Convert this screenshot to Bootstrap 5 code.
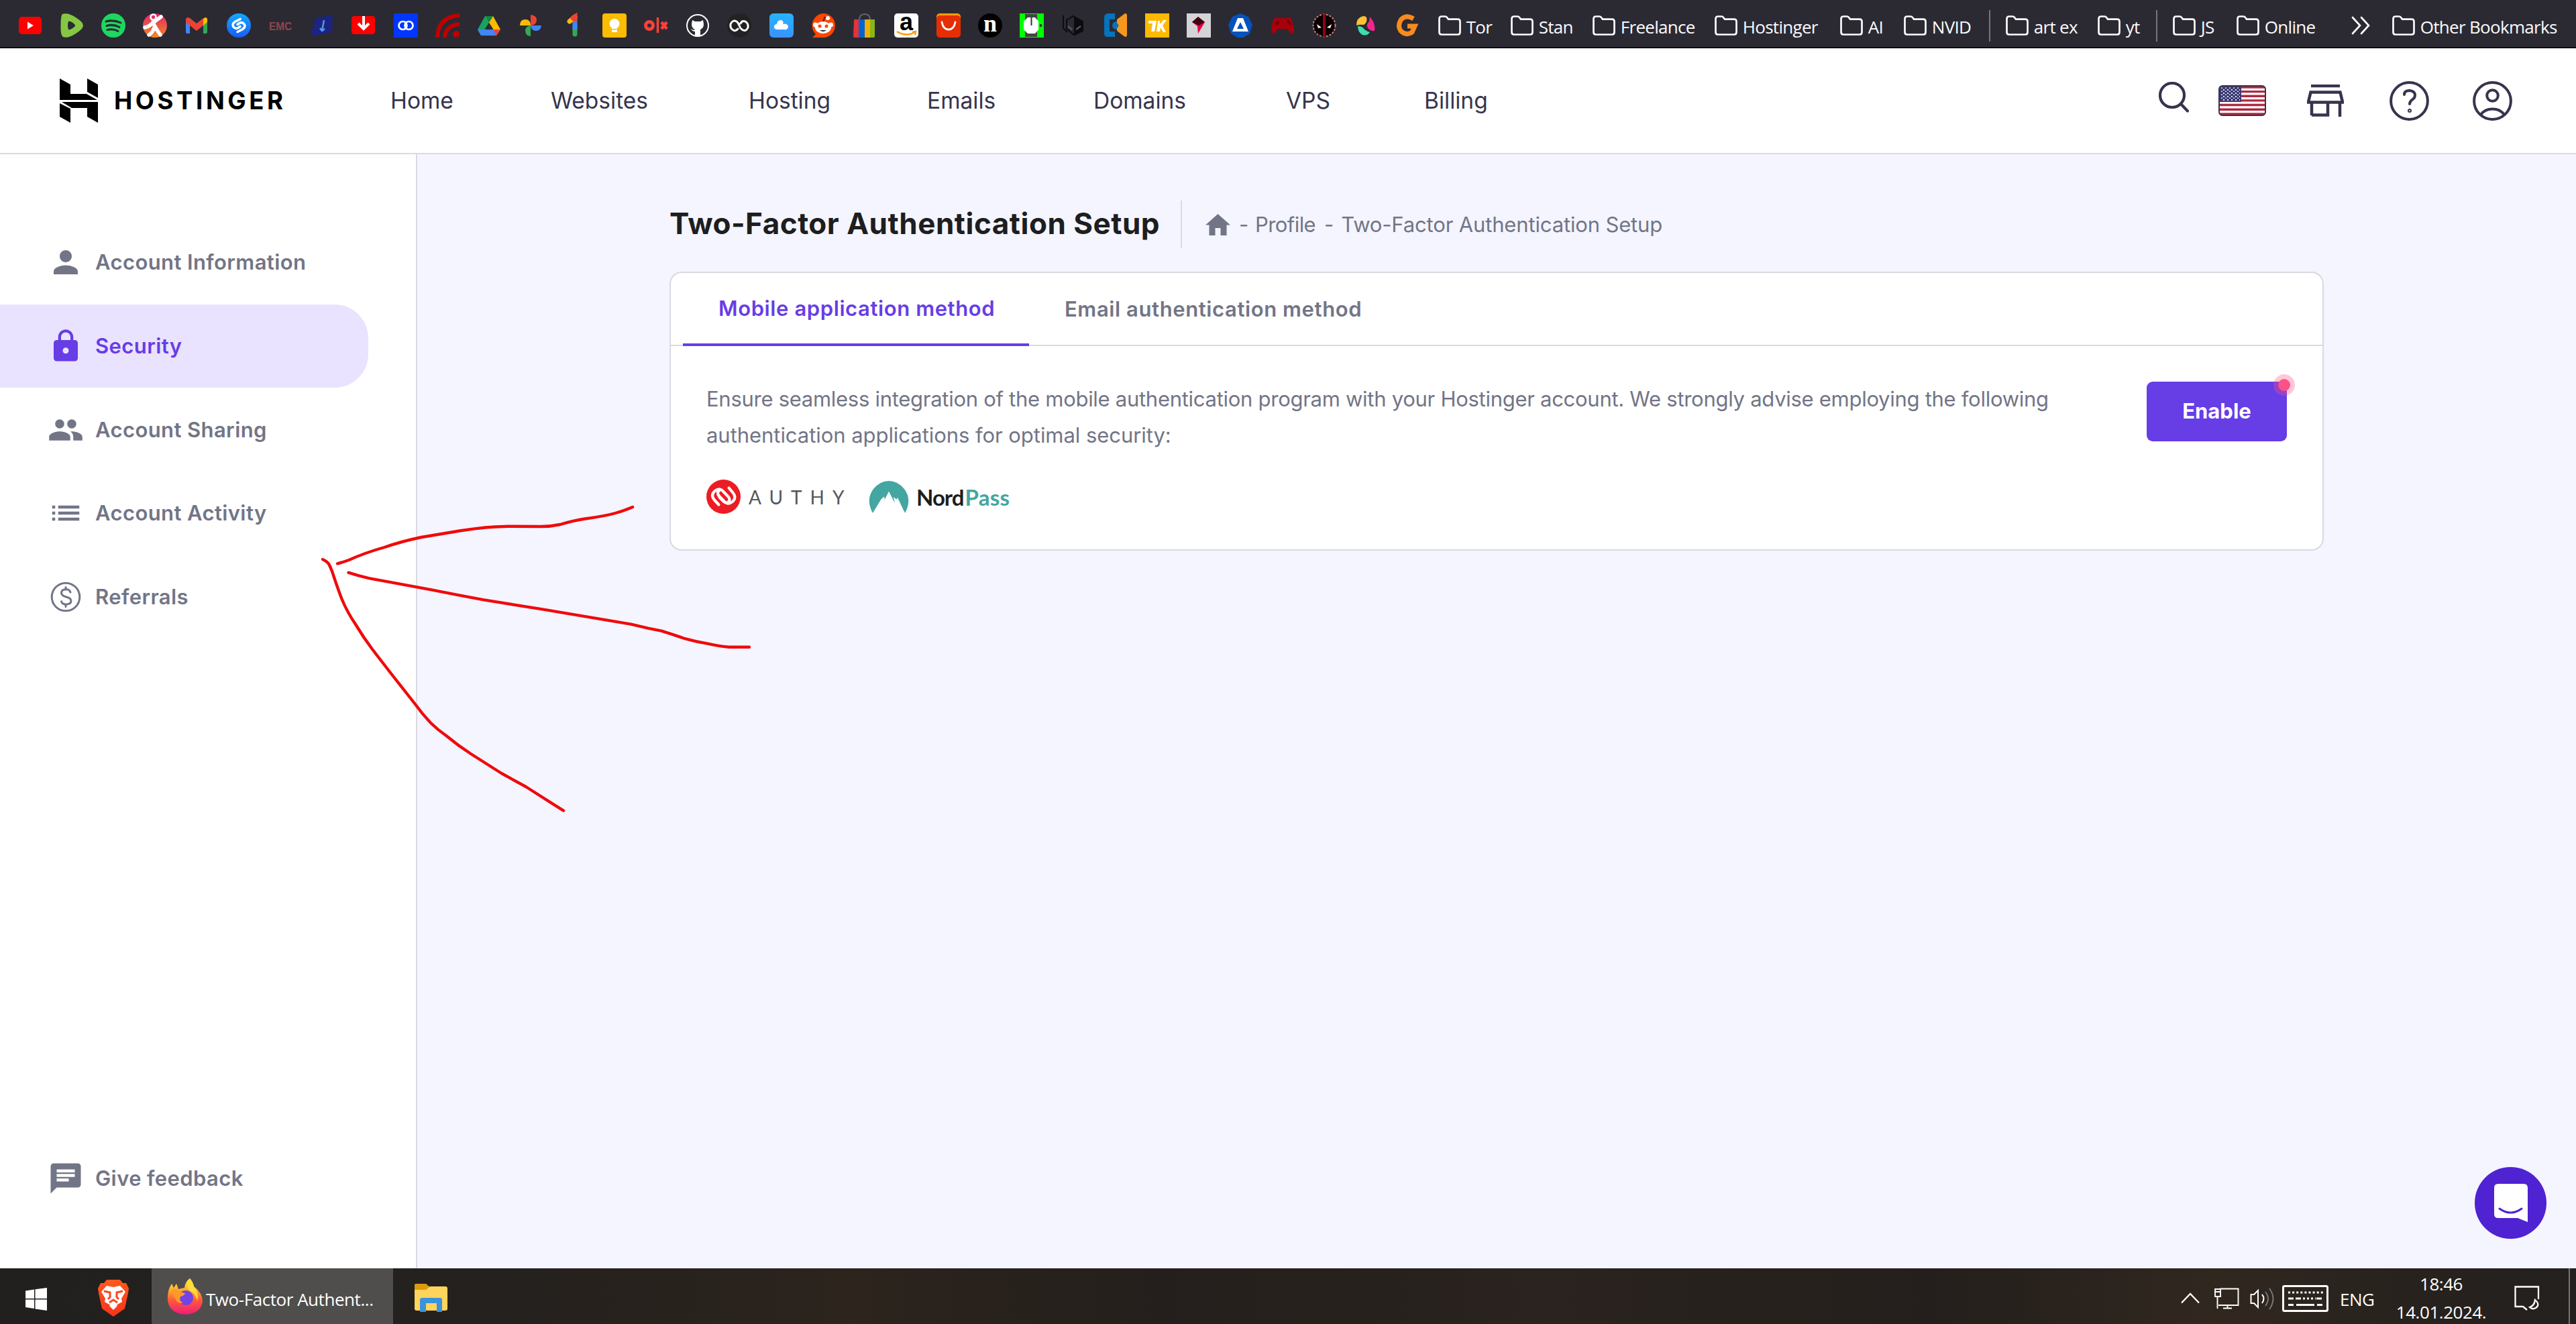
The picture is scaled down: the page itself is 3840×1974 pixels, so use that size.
<!DOCTYPE html>
<html lang="en">
<head>
<meta charset="utf-8">
<title>Two-Factor Authentication Setup</title>
<link href="https://cdn.jsdelivr.net/npm/bootstrap@5.3.0/dist/css/bootstrap.min.css" rel="stylesheet">
<style>
html,body{height:1974px;overflow:hidden}
body{font-family:Inter,"Liberation Sans",sans-serif;font-size:31px;line-height:54px;color:#727586;background:#f4f5ff}
svg{display:block;flex:none}
a{color:inherit;text-decoration:none}
.bookmarks{height:72px;background:#2b2a33;border-bottom:2px solid #0c0c10;padding-left:13.4px;padding-bottom:2px;color:#fbfbfe;font:26px/36px "Open Sans",sans-serif;letter-spacing:-.7px}
.favs{display:grid;grid-template-columns:repeat(34,62.24px);justify-items:center}
.favs svg{width:36px;height:36px;overflow:visible;letter-spacing:0}
.folders{display:grid;margin-left:13.4px;align-items:center;grid-template-columns:108px 122px 182px 187px 95px 128px 24px 137px 88px 24px 95px 171px 61px 270px}
.folders svg{width:36px;height:36px;margin-right:7px}
.folders a{height:36px;white-space:nowrap}
.folders a span{padding-top:2px}
.folders i{width:2px;height:47px;background:#76757f}
.topbar{height:158px;border-bottom:2px solid #d8dae0;color:#36344d}
.brand-text{font-size:36.5px;font-weight:700;letter-spacing:4.6px;color:#000;margin-left:23px;width:412px}
.mainnav{display:grid;grid-template-columns:239px 295px 266px 248px 287px 206px 110px;font-size:33.5px}
.tools{padding-right:95px}
.sidebar{width:622px;border-right:2px solid #d8dae0;padding-top:99px;font-weight:600;letter-spacing:.4px}
.sidebar a{height:124.7px;padding-left:71px}
.sidebar svg{width:54px;height:54px;margin-right:17px}
.sidebar .current{background:#eae3ff;color:#673de6;width:549px;border-radius:0 50px 50px 0}
.feedback{margin-bottom:72px}
.content{padding:69px 0 0 376px}
.page-title{font-size:44px;font-weight:700;color:#1d1e20;letter-spacing:.52px;width:762px;padding-bottom:2px}
.crumbs{height:71px;border-left:2px solid #d8dae0;padding-left:35px;letter-spacing:-.15px;white-space:pre}
.panel{width:2466px;height:416px;margin-top:35px;border:2px solid #d8dae0;border-radius:18px}
.tabs{height:109px;border-bottom:2px solid #d8dae0;padding-left:18px;font-weight:600;letter-spacing:.6px}
.tabs a{width:516px;height:109px;padding:0 0 2px 53px;white-space:nowrap}
.tabs .current{color:#673de6;border-bottom:4px solid #673de6;padding-bottom:0}
.panel-main{padding:52px 53px 0 53px}
.advice{width:2040px;letter-spacing:-.28px;margin-bottom:39px}
.advice span{letter-spacing:-.05px}
.enable{width:209px;height:89px;margin-top:1px;border-radius:9px;background:#673de6;color:#fff;font-weight:700;font-size:31px}
.pulse{right:-12px;top:-11px;width:32px;height:32px;border-radius:50%;background:rgba(252,81,133,.32)}
.pulse::after{content:"";position:absolute;inset:7px;border-radius:50%;background:#fc5185}
.authy{font:28px/50px Lato,sans-serif;letter-spacing:12px;color:#54585c;margin-left:12px;width:179px}
.nord{font:700 33px/50px Lato,sans-serif;letter-spacing:-1px;color:#1d1e20;margin-left:11px;padding-top:1px}
.nord span{color:#44a6a1;letter-spacing:.3px;margin-left:2px}
.taskbar{height:83px;background:linear-gradient(90deg,#21201e 0,#25211e 20%,#2c241d 33%,#241f1c 45%,#2a231f 60%,#241f1c 75%,#30271f 86%,#27221e 94%,#24201e);color:#fff;font:26px/42px "Open Sans",sans-serif;letter-spacing:-.45px}
.task{width:360px;height:83px;background:#4f4e4c;padding-left:23px;margin-left:34px}
.chat{position:fixed;left:3689px;top:1740px;width:107px;height:107px}
.pen{left:0;top:0;pointer-events:none}
.clock{width:150px;margin-left:24px;letter-spacing:-.45px;text-align:center}
</style>
<script src="https://cdn.jsdelivr.net/npm/bootstrap@5.3.0/dist/js/bootstrap.bundle.min.js"></script>
</head>
<body class="d-flex flex-column">
<svg width="0" height="0" class="position-absolute"><defs>
<symbol id="folder" viewBox="0 0 36 36"><path d="M2.500 28V8q0-3.500 3.500-3.500h5q2 0 3 1.500l2 2.600h14q3.500 0 3.500 3.500V28q0 3.500-3.500 3.500H6q-3.500 0-3.500-3.500Z" fill="none" stroke="#fbfbfe" stroke-width="2.700"/></symbol>
<linearGradient id="gs" x2="0" y2="1"><stop stop-color="#12a8ff"/><stop offset="1" stop-color="#1a5cf5"/></linearGradient>
<linearGradient id="gf" x2="0" y2="1"><stop stop-color="#e0246a"/><stop offset="1" stop-color="#f58a22"/></linearGradient>
<linearGradient id="gc" x2="0" y2="1"><stop stop-color="#25b4ff"/><stop offset="1" stop-color="#3a93ff"/></linearGradient>
<linearGradient id="gb" x2="0" y2="1"><stop stop-color="#ff5a1f"/><stop offset="1" stop-color="#f8331b"/></linearGradient>
<linearGradient id="gx" x2="0" y2="1"><stop stop-color="#fff14f"/><stop offset=".3" stop-color="#ffb02c"/><stop offset=".6" stop-color="#ff5a3a"/><stop offset="1" stop-color="#f0197d"/></linearGradient>
</defs></svg>

<div class="bookmarks d-flex align-items-center flex-none">
<div class="favs pt-2">
<svg viewBox="0 0 36 36"><rect x="1" y="5" width="34" height="26" rx="5" fill="red"/><path d="M14 12.500v11l9-5.500Z" fill="#fff"/></svg>
<svg viewBox="0 0 36 36"><path fill-rule="evenodd" fill="#85c742" d="M4 1Q12-2 24 6q11 7 11 12t-11 12Q12 38 5 35 1 33 1.500 18 1.500 3 4 1Zm9 11q-2 6 0 12 3 1 9-4 2-2 0-4-6-5-9-4Z"/></svg>
<svg viewBox="0 0 36 36"><circle cx="18" cy="18" r="18" fill="#1ed760"/><path d="M7 12q11-3 22 2M8 18.500q10-3 19 2M9 24.500q9-2 16 2" fill="none" stroke="#2b2a33" stroke-width="3" stroke-linecap="round"/></svg>
<svg viewBox="0 0 36 36"><circle cx="18" cy="18" r="18" fill="url(#gf)"/><circle cx="15.500" cy="5.500" r="4" fill="none" stroke="#fff" stroke-width="2.500"/><path d="M3 21q6-1 12-7l12-9M15 13q3 8 11 19M17 21q-2 7-8 11" fill="none" stroke="#fff" stroke-width="5.500" stroke-linecap="round"/></svg>
<svg viewBox="0 0 36 36"><path d="M2 8v20q0 2 2 2h4V14Z" fill="#4285f4"/><path d="M34 8v20q0 2-2 2h-4V14Z" fill="#34a853"/><path d="M28 8q4-4 6 0v5l-6 5Z" fill="#fbbc04"/><path d="M2 9q1-5 6-2l10 8 10-8v11l-10 8-10-8-6-5Z" fill="#ea4335"/></svg>
<svg viewBox="0 0 36 36"><circle cx="18" cy="18" r="18" fill="url(#gs)"/><path d="m20 8.500-7 3.500q-6 4-3 8t8 1l2-1.500M16 27.500l7-3.500q6-4 3-8t-8-1l-2 1.500" fill="none" stroke="#fff" stroke-width="3.600" stroke-linecap="round"/></svg>
<svg viewBox="0 0 36 36"><text x="1" y="25" textLength="34" lengthAdjust="spacingAndGlyphs" font-family="Liberation Sans" font-size="17" font-weight="700" fill="#91454a">EMC</text></svg>
<svg viewBox="0 0 36 36"><path d="M8 7 34 2l-1 26-32 6Z" fill="#1c247f"/><path d="m21 10-3 16m-3-4 3 4 4-3" stroke="#5596ed" stroke-width="2.500" fill="none"/></svg>
<svg viewBox="0 0 36 36"><rect y="4" width="35" height="27" rx="4" fill="red"/><path d="M18 4v17M10 15l8 8 8-8" stroke="#fff" stroke-width="4" fill="none"/></svg>
<svg viewBox="0 0 36 36"><path fill="#0136fe" d="M0 0h36v36H0Z"/><g fill="none" stroke="#fff" stroke-width="2.700"><rect x="7.500" y="12" width="12" height="12" rx="6"/><rect x="16.500" y="12" width="12" height="12" rx="6"/></g></svg>
<svg viewBox="0 0 36 36"><path d="M3 36Q4 5 36 3M14 36q1-18 22-20" fill="none" stroke="#bf0000" stroke-width="6"/><circle cx="31" cy="31" r="5" fill="#bf0000"/></svg>
<svg viewBox="0 0 36 36"><path d="M12 4h12L12 24 6 33 1 24Z" fill="#1aa260"/><path d="M12 4h12l11 20H24Z" fill="#ffba00"/><path d="M1 24h34l-6 9H6Z" fill="#4285f4"/><path d="M12 4h12l-6 10Z" fill="#128642"/><path d="m29 33 6-9H24Z" fill="#ea4335"/><path d="m18 14 6 9H12Z" fill="#2b2a33"/></svg>
<svg viewBox="0 0 36 36"><path d="M18 2q9 1 9 8t-9 8Z" fill="#ea4335"/><path d="M34 18q-1 8-8 8t-8-8Z" fill="#4285f4"/><path d="M18 34q-8-1-8-8t8-8Z" fill="#34a853"/><path d="M2 18q0-9 8-9t8 9Z" fill="#fbbc04"/></svg>
<svg viewBox="0 0 36 36" fill="none" stroke-width="7" stroke-linecap="round"><path d="M21 18v13" stroke="#34a853"/><path d="M21 6v18" stroke="#4285f4" stroke-linecap="butt"/><path d="m13 12 8-7" stroke="#fbbc04"/><path d="m18 7 3-2v4" stroke="#ea4335"/></svg>
<svg viewBox="0 0 36 36"><rect width="36" height="36" rx="4" fill="#fbbc04"/><circle cx="18" cy="15.500" r="7.500" fill="#fff"/><path d="M14 19h8v4h-8Zm0 5.500h8V28h-8Z" fill="#fff"/></svg>
<svg viewBox="0 0 36 36" fill="none" stroke="#ff4036"><circle cx="8" cy="18" r="5.500" stroke-width="5"/><path d="M20.500 6v23" stroke-width="3.500"/><path d="m26 13 8 10m0-10-8 10" stroke-width="4.500"/></svg>
<svg viewBox="0 0 36 36"><circle cx="18" cy="18" r="16" fill="none" stroke="#fff" stroke-width="2"/><path d="M14 33v-6q-4 0-6-4 4 3 6 1-5-2-5-8l1-6 4 2h8l4-2 1 6q0 6-5 8v9Z" fill="#fff"/></svg>
<svg viewBox="0 0 36 36"><circle cx="18" cy="18" r="18" fill="#222"/><path d="M16 23q-3 4-7 2-5-3-4-9 3-7 9-4 3 2 4 6t4 6q6 4 9-3 1-6-4-9-5-2-7 3" fill="none" stroke="#fff" stroke-width="3" stroke-linecap="round"/></svg>
<svg viewBox="0 0 36 36"><rect width="36" height="36" rx="6" fill="url(#gc)"/><path d="M11 24q-5-1-4-5 1-3 4-3 1-7 7-6 4 2 2 6 7-2 8 4-1 5-6 4Z" fill="#fff"/></svg>
<svg viewBox="0 0 36 36"><path d="M18 0a18 18 0 0 1 0 36H2l5-5A18 18 0 0 1 18 0Z" fill="#ff4500"/><path d="m18 13 2-7h5" fill="none" stroke="#222" stroke-width="1.500"/><g fill="#fff"><ellipse cx="18" cy="21" rx="12" ry="9"/><circle cx="6.500" cy="17" r="3.500"/><circle cx="29.500" cy="17" r="3.500"/><circle cx="25" cy="7" r="3"/></g><path d="M13 25h10q-5 4-10 0Z" fill="#222"/><circle cx="13" cy="19" r="2.500" fill="#ff4500"/><circle cx="23" cy="19" r="2.500" fill="#ff4500"/></svg>
<svg viewBox="0 0 36 36"><path d="M10 10q0-9 8-9t8 9" fill="none" stroke="#666" stroke-width="2"/><path d="M2 9h8v27H3q-2 0-2-2Z" fill="#e53238"/><path d="M9 9h9v27H9Z" fill="#0064d2"/><path d="M18 9h8v27h-8Z" fill="#f5af02"/><path d="M26 9h7v25q0 2-2 2h-5Z" fill="#86b817"/></svg>
<svg viewBox="0 0 36 36"><rect width="36" height="36" rx="5" fill="#fff"/><text x="8" y="25" font-family="Liberation Sans" font-size="36" font-weight="700" fill="#000">a</text><path d="M4 27q13 8 25 2m-2-1 5-1-1 5" fill="none" stroke="#f90" stroke-width="2.500"/></svg>
<svg viewBox="0 0 36 36"><rect width="36" height="20" rx="5" fill="#ff9c00"/><rect y="3" width="36" height="33" rx="5" fill="#e62e04"/><path d="M8 13q2 11 10 11t10-11" fill="none" stroke="#fff" stroke-width="2.800" stroke-linecap="round"/></svg>
<svg viewBox="0 0 36 36"><circle cx="18" cy="18" r="18" fill="#000"/><text x="8" y="27" font-family="Liberation Serif" font-size="36" font-weight="700" fill="#fff">n</text></svg>
<svg viewBox="0 0 36 36"><path fill="#0f0" d="M0 0h36v36H0Z"/><path fill="#444" d="M8 1h18v34H8Z"/><path d="M12 6h11l5 6v12l-5 6H12l-6-6V12Z" fill="#fff"/><path d="M17.500 6v12" stroke="#333" stroke-width="2"/><path d="M30 16h3v4h-3Z" fill="#333"/></svg>
<svg viewBox="0 0 36 36"><path d="M3 3v19l6 6M18 4l14 8v14l-13 6-11-9V10Z" fill="none" stroke="#0c0c10" stroke-width="2"/><path d="M19 4l13 8v14l-13 6Z" fill="#0c0c10"/><path d="m10 19 6 5M22 24l7-5" stroke="#55545e" stroke-width="2.500"/></svg>
<svg viewBox="0 0 36 36"><path d="M17 0v9H9v18h8v8H6q-5 0-5-5V6q0-5 5-6Z" fill="#0673ba"/><circle cx="19" cy="18" r="6" fill="#0673ba"/><path fill-rule="evenodd" d="m20 9 12-9q3 0 3 3v29q0 3-3 3l-12-9v-4q5-4 0-8Zm0 0" fill="#f7981d"/></svg>
<svg viewBox="0 0 36 36"><path fill="#ffb900" d="M0 0h36v36H0Z"/><path d="M5 11h12l-3 16H9l2-12H5Zm14 0-2 16h5l1-6 4 7h4l-5-10 6-8h-5l-5 6v-5Z" fill="#fff"/></svg>
<svg viewBox="0 0 36 36"><path fill="#d3d4d5" d="M0 0h36v36H0Z"/><path d="m17 5 10 8-10 17-1-11-8-6Z" fill="#e40046"/><path d="m17 5 10 8-9 5-10-5Z" fill="#40000f"/></svg>
<svg viewBox="0 0 36 36"><path d="m18 0 12 5 6 12-4 13-10 6h-8L4 30 0 17 6 5Z" fill="#0452bd"/><path d="M14 7h8l8 20H6Z" fill="#fff"/><path d="m18 13 5 10H13Z" fill="#0452bd"/></svg>
<svg viewBox="0 0 36 36"><path d="M6 7q3-2 7 0h10q4-2 7 0 5 8 5 21-3 4-6 1l-4-6H11l-5 6q-4 2-5-2Q1 15 6 7Z" fill="#a9000c"/><path d="M7 14h6m-3-3v6" stroke="#600" stroke-width="2.500"/><circle cx="26" cy="12" r="2" fill="#600"/><circle cx="29" cy="15" r="2" fill="#600"/></svg>
<svg viewBox="0 0 36 36"><circle cx="18" cy="18" r="16.500" fill="#0a0000" stroke="#c98085" stroke-width="2" stroke-dasharray="3 2"/><path d="M18 1v34" stroke="#8c0612" stroke-width="4"/><path d="m7 16 7 5-5 1Zm22 0-7 5 5 1Z" fill="#fff"/></svg>
<svg viewBox="0 0 36 36"><path d="M4 18q0-12 10-14 4 0 5 2 2 7-4 11-6-1-11 1Z" fill="#ffc233"/><path d="M24 5q9 10 7 21-7 1-11-6-1-4 3-8Z" fill="#f3268c"/><path d="M6 19q7 0 10 5 4 3 8 4-4 6-11 4-7-4-7-13Z" fill="#3fdcae"/></svg>
<svg viewBox="0 0 36 36"><path d="M27 8Q15 1 8 10 3 19 8 26q8 8 17 2l4-9H18" fill="none" stroke="#f98b1d" stroke-width="7"/></svg>
</div>
<div class="folders pt-2">
<a class="d-flex"><svg><use href="#folder"/></svg><span>Tor</span></a>
<a class="d-flex"><svg><use href="#folder"/></svg><span>Stan</span></a>
<a class="d-flex"><svg><use href="#folder"/></svg><span>Freelance</span></a>
<a class="d-flex"><svg><use href="#folder"/></svg><span>Hostinger</span></a>
<a class="d-flex"><svg><use href="#folder"/></svg><span>AI</span></a>
<a class="d-flex"><svg><use href="#folder"/></svg><span>NVID</span></a>
<i></i>
<a class="d-flex"><svg><use href="#folder"/></svg><span>art ex</span></a>
<a class="d-flex"><svg><use href="#folder"/></svg><span>yt</span></a>
<i></i>
<a class="d-flex"><svg><use href="#folder"/></svg><span>JS</span></a>
<a class="d-flex"><svg><use href="#folder"/></svg><span>Online</span></a>
<svg viewBox="0 0 36 36" fill="none" stroke="#fbfbfe" stroke-width="2.700" stroke-linecap="round"><path d="m3 6 11 12L3 30M16 6l11 12-11 12"/></svg>
<a class="d-flex"><svg><use href="#folder"/></svg><span>Other Bookmarks</span></a>
</div>
</div>

<header class="topbar d-flex align-items-center bg-white">
<svg width="59" height="66" viewBox="0 0 59 66" style="margin-left:88px"><path d="M1 0l16 9v14h24l16 9H1Zm41 0 16 9v20l-16-9ZM1 37l16 8v21L1 57Zm3-2h54v31l-16-9V44H19Z"/></svg>
<span class="brand-text">HOSTINGER</span>
<nav class="mainnav"><a>Home</a><a>Websites</a><a>Hosting</a><a>Emails</a><a>Domains</a><a>VPS</a><a>Billing</a></nav>
<div class="tools d-flex align-items-center ms-auto">
<svg width="46" height="56" viewBox="0 0 46 56" fill="none" stroke="#36344d" stroke-width="4.200" stroke-linecap="round"><circle cx="20" cy="20" r="18"/><path d="m33 33 10 10.500"/></svg>
<svg width="71" height="46" viewBox="0 0 71 46" style="margin-left:43px"><defs><clipPath id="fl"><rect x="1.500" y="1.500" width="68" height="43" rx="4"/></clipPath><pattern id="stars" width="6" height="5" patternUnits="userSpaceOnUse"><path d="M1 1h2v2H1ZM4 3.500h2v1.500H4Z" fill="#dfe0f0"/></pattern></defs><g clip-path="url(#fl)"><path fill="#fff" d="M0 0h71v46H0Z"/><path d="M0 3h71M0 9.600h71M0 16.200h71M0 22.900h71M0 29.500h71M0 36.200h71M0 43h71" stroke="#ae2a43" stroke-width="3.400"/><path fill="#3c3b72" d="M0 0h34v25H0Z"/><path fill="url(#stars)" d="M3 3h29v20H3Z"/></g><rect x="1" y="1" width="69" height="44" rx="5" fill="none" stroke="#36344d" stroke-width="2"/></svg>
<svg width="55" height="48" viewBox="0 0 55 48" style="margin-left:61px" fill="none" stroke="#36344d" stroke-width="4.500"><path d="M6 2h43M5.500 11.500h44L53 26v.500H2V26ZM7 26v20M49 26v22M31 26v19.500H7"/></svg>
<svg width="59" height="59" viewBox="0 0 59 59" style="margin-left:68px" fill="none" stroke="#36344d" stroke-width="4" stroke-linecap="round"><circle cx="29.500" cy="29.500" r="27.400"/><path d="M22 20q0-6 8-6 8 1 8 7 0 4-4 6.500-4 3-4 6.500"/><circle cx="30" cy="44" r="1"/></svg>
<svg width="59" height="59" viewBox="0 0 59 59" style="margin-left:65px" fill="none" stroke="#36344d" stroke-width="4"><circle cx="29.500" cy="29.500" r="27.400"/><circle cx="29.500" cy="21.500" r="8.300"/><path d="M12 50q6-8.500 17.500-8.500T47 50"/></svg>
</div>
</header>

<div class="d-flex flex-grow-1" style="height:1661px">
<aside class="sidebar bg-white d-flex flex-column flex-shrink-0">
<a class="d-flex align-items-center"><svg viewBox="0 0 24 24" fill="currentColor"><path d="M12 12c2.210 0 4-1.790 4-4s-1.790-4-4-4-4 1.790-4 4 1.790 4 4 4zm0 2c-2.670 0-8 1.340-8 4v2h16v-2c0-2.660-5.330-4-8-4z"/></svg>Account Information</a>
<a class="current d-flex align-items-center"><svg viewBox="0 0 24 24" fill="currentColor"><path d="M18 8h-1V6c0-2.760-2.240-5-5-5S7 3.240 7 6v2H6c-1.100 0-2 .9-2 2v10c0 1.100.9 2 2 2h12c1.100 0 2-.9 2-2V10c0-1.100-.9-2-2-2zm-6 9c-1.100 0-2-.9-2-2s.9-2 2-2 2 .9 2 2-.9 2-2 2zm3.100-9H8.900V6c0-1.710 1.390-3.100 3.100-3.100 1.710 0 3.100 1.390 3.100 3.100v2z"/></svg>Security</a>
<a class="d-flex align-items-center"><svg viewBox="0 0 24 24" fill="currentColor"><path d="M16 11c1.660 0 2.990-1.340 2.990-3S17.660 5 16 5s-3 1.340-3 3 1.340 3 3 3zm-8 0c1.660 0 2.990-1.340 2.990-3S9.660 5 8 5 5 6.340 5 8s1.340 3 3 3zm0 2c-2.330 0-7 1.170-7 3.500V19h14v-2.500C15 14.170 10.330 13 8 13zm8 0c-.29 0-.62.020-.97.050 1.160.84 1.970 1.970 1.970 3.450V19h6v-2.500c0-2.330-4.670-3.500-7-3.500z"/></svg>Account Sharing</a>
<a class="d-flex align-items-center"><svg viewBox="0 0 24 24" fill="currentColor"><path d="M3 13h2v-2H3v2zm0 4h2v-2H3v2zm0-8h2V7H3v2zm4 4h14v-2H7v2zm0 4h14v-2H7v2zM7 7v2h14V7H7z"/></svg>Account Activity</a>
<a class="d-flex align-items-center"><svg viewBox="0 0 54 54" fill="none" stroke="currentColor" stroke-width="3" stroke-linecap="round"><circle cx="27" cy="27" r="20.800"/><path d="M27 12.500V16m0 22v3.500M34 20q-1.500-4.500-7-4.500-6.500.500-6.500 5.500 0 4 6.500 5.700 8 2 8 6 0 5-7.500 5.500-6 0-7-4.500"/></svg>Referrals</a>
<a class="feedback mt-auto d-flex align-items-center"><svg viewBox="0 0 24 24" fill="currentColor"><path d="M20 2H4c-1.100 0-1.990.9-1.990 2L2 22l4-4h14c1.100 0 2-.9 2-2V4c0-1.100-.9-2-2-2zM6 9h12v2H6V9zm8 5H6v-2h8v2zm4-6H6V6h12v2z"/></svg>Give feedback</a>
</aside>
<main class="content">
<div class="d-flex align-items-center">
<h1 class="page-title mb-0">Two-Factor Authentication Setup</h1>
<nav class="crumbs d-flex align-items-center"><svg width="37" height="32" viewBox="0 0 37 32" fill="#727586"><path d="M18.500 0 37 16.500h-5.500V32h-9V21h-8v11h-9V16.500H0Z"/></svg><span style="margin-left:13px">-</span><span style="margin-left:10px;width:103px;letter-spacing:-.6px">Profile</span><span>-</span><span style="margin-left:11px">Two-Factor Authentication Setup</span></nav>
</div>
<section class="panel bg-white">
<nav class="tabs d-flex"><a class="current d-flex align-items-center">Mobile application method</a><a class="d-flex align-items-center">Email authentication method</a></nav>
<div class="panel-main d-flex justify-content-between align-items-start">
<div>
<p class="advice">Ensure seamless integration of the mobile authentication program with your Hostinger account. We strongly advise employing the following<br><span>authentication applications for optimal security:</span></p>
<div class="d-flex align-items-center">
<svg width="51" height="51" viewBox="0 0 51 51"><circle cx="25.500" cy="25.500" r="25.500" fill="#ed1c24"/><path d="m18.500 37.500-6.500-7q-6-7 0-13 7-6 13 0l8 8.500q3 4 0 7-3.500 3-7 0l-6.500-6.500M33.500 12.500l6 7q6 7 0 13-7 6-13 0l-8-8.500q-3-4 0-7" fill="none" stroke="#fff" stroke-width="4.200" stroke-linecap="round"/></svg>
<span class="authy">AUTHY</span>
<svg width="60" height="48" viewBox="0 0 60 48"><path d="M6 48Q-5 28 7 12q10-12 23-12t23 12q12 16 1 36L43 25l-5 8-8-17-8 17 2-8-3 0Z" fill="#44a6a1"/><path d="m30 16 9 17-2-9 5 4 12 20H6l12-20 5-5-2 10Z" fill="#fff"/></svg>
<span class="nord">Nord<span>Pass</span></span>
</div>
</div>
<button class="enable btn position-relative border-0 p-0">Enable<span class="pulse position-absolute"></span></button>
</div>
</section>
</main>
</div>

<footer class="taskbar d-flex align-items-center flex-shrink-0">
<svg width="33" height="34" viewBox="0 0 33 34" fill="#fff" style="margin-left:38px;margin-top:8px"><path d="m0 4.500 13-2V16H0ZM14.500 2.300 32 0v16H14.500ZM0 17.500h13V31L0 29Zm14.500 0H32V34l-17.500-2.500Z"/></svg>
<svg width="46" height="55" viewBox="0 0 46 55" style="margin-left:75px;margin-top:6px"><path d="m13 0h20l4 5h5l4 8-1 7-5 23-17 12L6 43 1 20l-1-7 4-8h5Z" fill="url(#gb)"/><path d="m13 9 10 2 10-2 8 9-6 10 1 5-7 4-6 7-6-7-7-4 1-5-6-10Z" fill="#fff"/><path d="m9 17 9 2v7l-3 3m22-12-9 2v7l3 3m-14 5 6-4 6 4" fill="none" stroke="#fb4620" stroke-width="3"/><path d="m17 39 6-3 6 3-6 6Z" fill="#fff"/></svg>
<div class="task d-flex align-items-center"><svg width="54" height="54" viewBox="0 0 54 54"><path d="M34 0q5 6 6 12 13 10 13 22-2 18-25 20Q4 53 1 33 0 18 7 8l3 6 4-6 3 8 9-2Q27 5 34 0Z" fill="url(#gx)"/><circle cx="28" cy="29" r="11" fill="#7542e5"/><path d="M7 16q8-2 12 4l8 2q-1 4-7 5-3 6 4 10-10 1-13-9Z" fill="#ff9a28"/><path d="M34 0q5 6 6 12 8 9 5 22-2-12-12-16-6-8 1-18Z" fill="#ffdc38"/></svg><span style="margin-left:4px;padding-top:8px">Two-Factor Authent...</span></div>
<svg width="49" height="42" viewBox="0 0 49 42" style="margin-left:32px;margin-top:5px"><path d="M0 2q0-2 2-2h15l6 5v10H0Z" fill="#dc9a0c"/><path d="M0 9h17l6-5h23q3 0 3 3v30q0 3-3 3H3q-3 0-3-3Z" fill="#ffd45c"/><path d="M8 42V24q0-3 3-3h27q3 0 3 3v18h-8V29H17v13Z" fill="#3a93dd"/></svg>
<div class="d-flex align-items-center ms-auto">
<svg width="28" height="17" viewBox="0 0 28 17" fill="none" stroke="#fff" stroke-width="2.300" style="margin-top:6px"><path d="M1 15.500 14 2l13 13.500"/></svg>
<svg width="38" height="32" viewBox="0 0 38 32" fill="none" stroke="#fff" stroke-width="1.900" style="margin-left:22px;margin-top:6px"><path d="M8 1.500h27.500V26H6M19.500 26v4M13 30.500h13M1 2h8v11H1Zm0 4h8M4.500 13v18"/></svg>
<svg width="38" height="34" viewBox="0 0 38 34" fill="none" stroke="#fff" stroke-width="2" style="margin-left:15px;margin-top:6px"><path d="M1.500 11H6l6-6v25l-6-6H1.500Z"/><path d="M18 11q5 6 0 13"/><path d="M23 7q8 10 0 21M29 2q11 15 0 31" stroke="#777"/></svg>
<svg width="69" height="40" viewBox="0 0 69 40" fill="none" stroke="#fff" style="margin-left:10px;margin-top:7px"><rect x="1.500" y="1.500" width="66" height="37" rx="2" stroke-width="3"/><path d="M9 11h52" stroke-width="3" stroke-dasharray="3 3.100"/><path d="M9 20h8m3 0h30m1 0h9" stroke-width="3" stroke-dasharray="8 3 3 3 3 3 3 3 3 3 3 3"/><path d="M9 29.500h8m4 0h27m4 0h8" stroke-width="3"/></svg>
<span style="margin-left:17px;padding-top:8px;width:52px">ENG</span>
<div class="clock" style="padding-top:5px">18:46<br>14.01.2024.</div>
<svg width="38" height="37" viewBox="0 0 38 37" fill="none" stroke="#fff" stroke-width="2.300" style="margin-left:34px;margin-top:6px"><path d="M36 20V1.500H1.500V31H13l6 5"/><path d="M31 21q-1 9-8 11 4 4 9 1 7-5-1-12Z"/></svg>
<i style="width:2px;height:83px;background:#77736f;margin-left:43px;margin-right:9px"></i>
</div>
</footer>

<svg class="chat" viewBox="0 0 107 107"><circle cx="53.500" cy="53.500" r="53.500" fill="#4f22d2"/><path d="M35 25h38q6 0 6 6v51l-15-6H35q-6 0-6-6V31q0-6 6-6Z" fill="#fff"/><path d="M37 62q16.500 12 33 0" fill="none" stroke="#4f22d2" stroke-width="3" stroke-linecap="round"/></svg>
<svg class="pen position-absolute" width="1200" height="1250" viewBox="0 0 1200 1250" fill="none" stroke="#f00a0c" stroke-width="4.400" stroke-linecap="round" stroke-linejoin="round"><path d="M503 840.300q8-2 17-5.300c20-9 35-14 53-19 20-7 36-11 55-15l42-7q40-7 68-8.500l19-.8 50 .3q14 0 28-3 20-6 37-8.500 30-4 45.500-8.500 14-4 25.500-9"/><path d="M519.400 853.700q15 5 30.600 8.500l92 17q40 8 78 15l87 14 133.500 22.500 25.500 6 20 4q19 6 35 11.500 18 5 34 7.500 20 4.500 32 5h30"/><path d="M481 834q5 2 8.600 6 3 5 5.400 11.700 7 22 14 40 8 20 20.500 38.300 12 20 25.500 38l27 35 37 47q10 14 23 27.700 10 10 23 19 18 15 37 27.300l45.600 29 36.400 20 37 23.700 19 12"/></svg>
</body>
</html>
